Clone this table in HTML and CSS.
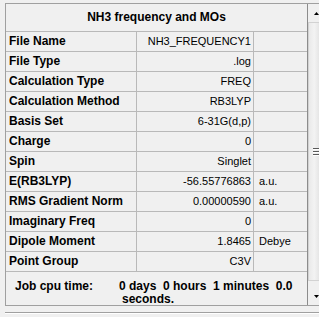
FILE: index.html
```html
<!DOCTYPE html>
<html>
<head>
<meta charset="utf-8">
<link rel="stylesheet" href="styles.css">
</head>
<body>
<div class="frame">
  <div class="grid">
    <div class="title">NH3 frequency and MOs</div>
    <div class="row"><div class="label">File Name</div><div class="value">NH3_FREQUENCY1</div><div class="unit"></div></div>
    <div class="row"><div class="label">File Type</div><div class="value">.log</div><div class="unit"></div></div>
    <div class="row"><div class="label">Calculation Type</div><div class="value">FREQ</div><div class="unit"></div></div>
    <div class="row"><div class="label">Calculation Method</div><div class="value">RB3LYP</div><div class="unit"></div></div>
    <div class="row"><div class="label">Basis Set</div><div class="value">6-31G(d,p)</div><div class="unit"></div></div>
    <div class="row"><div class="label">Charge</div><div class="value">0</div><div class="unit"></div></div>
    <div class="row"><div class="label">Spin</div><div class="value">Singlet</div><div class="unit"></div></div>
    <div class="row"><div class="label">E(RB3LYP)</div><div class="value">-56.55776863</div><div class="unit">a.u.</div></div>
    <div class="row"><div class="label">RMS Gradient Norm</div><div class="value">0.00000590</div><div class="unit">a.u.</div></div>
    <div class="row"><div class="label">Imaginary Freq</div><div class="value">0</div><div class="unit"></div></div>
    <div class="row"><div class="label">Dipole Moment</div><div class="value">1.8465</div><div class="unit">Debye</div></div>
    <div class="row"><div class="label">Point Group</div><div class="value">C3V</div><div class="unit"></div></div>
    <div class="job">
      <div class="job-label">Job cpu time:</div>
      <div class="job-time">0 days&nbsp; 0 hours&nbsp; 1 minutes&nbsp; 0.0 seconds.</div>
    </div>
  </div>
  <div class="scrollbar">
    <div class="sb-btn sb-up">
      <svg width="5" height="3" viewBox="0 0 5 3"><polygon points="2.5,0 5,3 0,3" fill="#000"/></svg>
    </div>
    <div class="sb-thumb">
      <svg width="7" height="8" viewBox="0 0 7 8">
        <rect x="0" y="0" width="7" height="1" fill="#5a5a5a"/>
        <rect x="0" y="1" width="7" height="1" fill="#ffffff"/>
        <rect x="0" y="3" width="7" height="1" fill="#5a5a5a"/>
        <rect x="0" y="4" width="7" height="1" fill="#ffffff"/>
        <rect x="0" y="6" width="7" height="1" fill="#5a5a5a"/>
        <rect x="0" y="7" width="7" height="1" fill="#ffffff"/>
      </svg>
    </div>
    <div class="sb-track"></div>
    <div class="sb-btn sb-down">
      <svg width="5" height="3" viewBox="0 0 5 3"><polygon points="0,0 5,0 2.5,3" fill="#000"/></svg>
    </div>
  </div>
</div>
<div class="sep"></div>
</body>
</html>
```
FILE: styles.css
```css
html, body {
  margin: 0;
  padding: 0;
  overflow: hidden;
}
body {
  width: 319px;
  height: 317px;
  background: #f0f0f0;
  font-family: "Liberation Sans", Arial, sans-serif;
  color: #000;
}
.frame {
  display: flex;
  box-sizing: border-box;
  width: 314px;
  margin: 3px 0 0 5px;
  border: 1px solid #a0a0a0;
  border-right: none;
  overflow: hidden;
}
.grid {
  width: 302px;
  flex-shrink: 0;
  box-sizing: border-box;
  border-right: 1px solid #8c8c8c;
}
.title {
  height: 28px;
  box-sizing: border-box;
  border-bottom: 1px solid #b9b9b9;
  font-weight: bold;
  font-size: 12px;
  line-height: 27px;
  text-align: center;
}
.row {
  display: flex;
  height: 20px;
  box-sizing: border-box;
  border-bottom: 1px solid #b9b9b9;
  line-height: 19px;
  white-space: nowrap;
}
.label {
  width: 131px;
  box-sizing: border-box;
  border-right: 1px solid #b9b9b9;
  padding-left: 3px;
  font-weight: bold;
  font-size: 12px;
}
.value {
  width: 117px;
  box-sizing: border-box;
  border-right: 1px solid #b9b9b9;
  padding-right: 2px;
  text-align: right;
  font-size: 11px;
}
.unit {
  flex: 1;
  padding-left: 5px;
  font-size: 11px;
}
.job {
  display: flex;
  height: 33px;
  box-sizing: border-box;
  padding: 8px 0 0 9px;
  font-weight: bold;
  font-size: 12px;
  line-height: 13px;
}
.job-label {
  width: 104px;
  flex-shrink: 0;
}
.job-time {
  flex: 1;
  padding: 0 6px 0 3px;
  text-indent: -3px;
}
.scrollbar {
  width: 17px;
  flex-shrink: 0;
  display: flex;
  flex-direction: column;
  background: #f0f0f0;
}
.sb-btn {
  display: flex;
  align-items: center;
  justify-content: center;
}
.sb-btn svg {
  display: block;
}
.sb-up {
  height: 18px;
}
.sb-down {
  height: 17px;
}
.sb-thumb {
  height: 259px;
  box-sizing: border-box;
  border: 1px solid #d2d2d2;
  background: linear-gradient(to right, #e9e9e9 0%, #f3f3f3 35%, #e4e4e4 70%, #d6d6d6 100%);
  display: flex;
  align-items: center;
  justify-content: center;
}
.sb-thumb svg {
  display: block;
}
.sb-track {
  flex: 1;
}
.sep {
  margin: 6px 0 0 5px;
  border-top: 1px solid #a0a0a0;
  border-bottom: 1px solid #ffffff;
}
```
